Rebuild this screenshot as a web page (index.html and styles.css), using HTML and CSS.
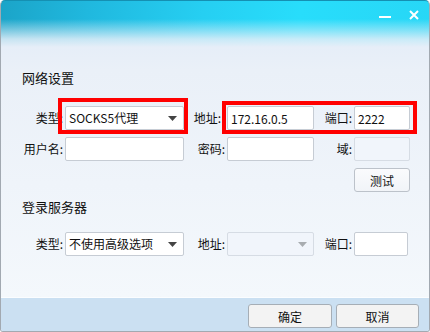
FILE: index.html
```html
<!DOCTYPE html>
<html lang="zh-CN">
  <head>
    <meta charset="UTF-8" />
    <title>网络设置</title>
    <meta name="viewport" content="width=device-width, initial-scale=1.0" />
    <link rel="stylesheet" href="styles.css">
  </head>

  <body>
    <div class="window">
      <div class="titlebar">
        <button class="tb-btn tb-min" aria-label="最小化">
          <svg width="12" height="10" viewBox="0 0 12 10">
            <rect x="0" y="6" width="12" height="2" fill="#fff" />
          </svg>
        </button>
        <button class="tb-btn tb-close" aria-label="关闭">
          <svg width="10" height="10" viewBox="0 0 10 10">
            <path d="M1 1 L9 9 M9 1 L1 9" stroke="#fff" stroke-width="2" />
          </svg>
        </button>
      </div>

      <div class="content">
        <h3 class="section-title">网络设置</h3>
        <div class="form-grid">
          <label class="field-label">类型:</label>
          <div class="select">
            <span>SOCKS5代理</span>
            <svg class="arrow" width="9" height="5" viewBox="0 0 9 5">
              <path d="M0 0 H9 L4.5 5 Z" fill="#444" />
            </svg>
          </div>
          <label class="field-label label-tight">地址:</label>
          <input class="text-input" type="text" value="172.16.0.5" />
          <label class="field-label">端口:</label>
          <input class="text-input" type="text" value="2222" />

          <label class="field-label">用户名:</label>
          <input class="text-input" type="text" />
          <label class="field-label">密码:</label>
          <input class="text-input" type="password" />
          <label class="field-label">域:</label>
          <input class="text-input" type="text" disabled />

          <button class="test-btn">测试</button>
        </div>

        <h3 class="section-title section-login">登录服务器</h3>
        <div class="form-grid form-login">
          <label class="field-label">类型:</label>
          <div class="select">
            <span>不使用高级选项</span>
            <svg class="arrow" width="9" height="5" viewBox="0 0 9 5">
              <path d="M0 0 H9 L4.5 5 Z" fill="#444" />
            </svg>
          </div>
          <label class="field-label">地址:</label>
          <div class="select select-disabled">
            <span></span>
            <svg class="arrow" width="9" height="5" viewBox="0 0 9 5">
              <path d="M0 0 H9 L4.5 5 Z" fill="#a8acb0" />
            </svg>
          </div>
          <label class="field-label">端口:</label>
          <input class="text-input port-short" type="text" />
        </div>
      </div>

      <div class="footer">
        <button class="dlg-btn">确定</button>
        <button class="dlg-btn">取消</button>
      </div>

      <div class="mark mark-proxy"></div>
      <div class="mark mark-addr"></div>
    </div>
  </body>
</html>
```

FILE: styles.css
```css
:root {
  --body-bg: #eaf0f8;
  --input-border: #c6ccd4;
  --disabled-bg: #f1f5fb;
  --footer-bg: #cbe0f2;
  --mark: #f00;
}

html,
body {
  margin: 0;
  height: 100%;
  font-family: "Noto Sans CJK SC", "Noto Sans", sans-serif;
  font-size: 12px;
  color: #111;
}

.window {
  position: relative;
  width: 430px;
  height: 332px;
  box-sizing: border-box;
  display: flex;
  flex-direction: column;
  border: 1px solid #a2a9b1;
  border-top-color: #1590b2;
  border-radius: 5px 5px 3px 3px;
  overflow: hidden;
  background: linear-gradient(
      180deg,
      rgba(234, 240, 248, 0) 18px,
      rgba(228, 238, 248, 0.85) 38px,
      #e6eef8 46px,
      #eaf0f8 70px,
      #f4f8fc 296px
    ),
    linear-gradient(
      100deg,
      #1ba4c8 0,
      #20b8de 18%,
      #26cff2 42%,
      #28ddfb 62%,
      #27d4f4 100%
    );
}

.titlebar {
  height: 40px;
  display: flex;
  justify-content: flex-end;
  align-items: flex-start;
  gap: 18px;
  padding: 9px 10px 0 0;
  box-sizing: border-box;
}

.tb-btn {
  border: none;
  background: none;
  padding: 0;
  margin: 0;
  display: block;
  cursor: pointer;
}

.tb-btn svg {
  display: block;
}

.content {
  padding-left: 21px;
}

.section-title {
  margin: 28px 0 0 0;
  font-size: 13px;
  font-weight: normal;
  line-height: 18px;
}

.section-login {
  margin-top: 6px;
}

.form-grid {
  margin-top: 19px;
  display: grid;
  grid-template-columns: 43px 119px 43px 87px 40px 56px;
  grid-auto-rows: 24px;
  row-gap: 7px;
}

.form-login {
  margin-top: 16px;
}

.field-label {
  text-align: right;
  padding-right: 2px;
  line-height: 24px;
  white-space: nowrap;
}

.label-tight {
  padding-right: 6px;
}

.text-input,
.select {
  box-sizing: border-box;
  height: 24px;
  width: 100%;
  margin: 0;
  padding: 0 3px;
  border: 1px solid var(--input-border);
  border-radius: 2px;
  background: #fff;
  font: inherit;
  font-size: 12px;
  color: #111;
  outline: none;
}

.text-input:disabled {
  background: var(--disabled-bg);
  border-color: #d6dce4;
}

.port-short {
  width: 54px;
}

.select {
  display: flex;
  align-items: center;
  justify-content: space-between;
  padding-right: 6px;
  line-height: 22px;
}

.select .arrow {
  display: block;
}

.select-disabled {
  background: var(--disabled-bg);
  border-color: #d6dce4;
}

.test-btn {
  grid-column: 6;
  height: 24px;
  margin: 0;
  padding: 0;
  border: 1px solid #bcc2ca;
  border-radius: 3px;
  background: linear-gradient(#fafbfd, #f1f4f8);
  font: inherit;
  font-size: 12px;
  color: #111;
  cursor: pointer;
}

.footer {
  margin-top: auto;
  height: 34px;
  box-sizing: border-box;
  border-top: 1px solid #fbfdff;
  background: var(--footer-bg);
  display: flex;
  justify-content: flex-end;
  align-items: flex-start;
  gap: 4px;
  padding: 6px 10px 0 0;
}

.dlg-btn {
  width: 84px;
  height: 24px;
  margin: 0;
  padding: 0;
  border: 1px solid #a6aeb6;
  border-radius: 3px;
  background: #f3f3f3;
  font: inherit;
  font-size: 12px;
  color: #111;
  cursor: pointer;
}

.dlg-btn + .dlg-btn {
  width: 83px;
}

.mark {
  position: absolute;
  box-sizing: border-box;
  border: 4px solid var(--mark);
  pointer-events: none;
}

.mark-proxy {
  left: 57px;
  top: 97px;
  width: 130px;
  height: 36px;
}

.mark-addr {
  left: 221px;
  top: 100px;
  width: 195px;
  height: 33px;
}
```
